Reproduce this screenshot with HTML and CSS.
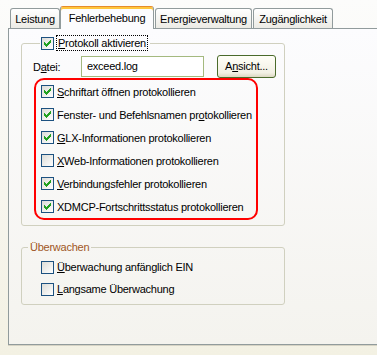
FILE: index.html
```html
<!DOCTYPE html>
<html lang="de">
<head>
    <meta charset="UTF-8">
    <title>Fehlerbehebung</title>
    <link rel="stylesheet" href="styles.css">
</head>
<body>

    <div class="dialog">
        <!-- Tabs -->
        <div class="tabs">
            <div class="tab tab-leistung">Leistung</div>
            <div class="tab tab-active">Fehlerbehebung</div>
            <div class="tab tab-energie">Energieverwaltung</div>
            <div class="tab tab-zugang">Zugänglichkeit</div>
        </div>

        <!-- Tab page -->
        <div class="pane">
            <fieldset class="group group-log">
                <legend class="log-title">
                    <span class="check checked"><svg viewBox="0 0 11 11" width="11" height="11"><path d="M2 4h1v1h1v1h1v-1h1v-1h1v-1h1v-1h1v3h-1v1h-1v1h-1v1h-1v1h-1v-1h-1v-1h-1z"/></svg></span>
                    <span class="focus-label"><u>P</u>rotokoll aktivieren</span>
                </legend>
                <div class="group-body">
                    <div class="file-row">
                        <span class="file-label">D<u>a</u>tei:</span>
                        <span class="text-input">exceed.log</span>
                        <span class="button">A<u>n</u>sicht...</span>
                    </div>
                    <div class="options">
                        <div class="option"><span class="check checked"><svg viewBox="0 0 11 11" width="11" height="11"><path d="M2 4h1v1h1v1h1v-1h1v-1h1v-1h1v-1h1v3h-1v1h-1v1h-1v1h-1v1h-1v-1h-1v-1h-1z"/></svg></span><span><u>S</u>chriftart öffnen protokollieren</span></div>
                        <div class="option"><span class="check checked"><svg viewBox="0 0 11 11" width="11" height="11"><path d="M2 4h1v1h1v1h1v-1h1v-1h1v-1h1v-1h1v3h-1v1h-1v1h-1v1h-1v1h-1v-1h-1v-1h-1z"/></svg></span><span>Fenster- und Befehlsnamen pr<u>o</u>tokollieren</span></div>
                        <div class="option"><span class="check checked"><svg viewBox="0 0 11 11" width="11" height="11"><path d="M2 4h1v1h1v1h1v-1h1v-1h1v-1h1v-1h1v3h-1v1h-1v1h-1v1h-1v1h-1v-1h-1v-1h-1z"/></svg></span><span><u>G</u>LX-Informationen protokollieren</span></div>
                        <div class="option"><span class="check"></span><span><u>X</u>Web-Informationen protokollieren</span></div>
                        <div class="option"><span class="check checked"><svg viewBox="0 0 11 11" width="11" height="11"><path d="M2 4h1v1h1v1h1v-1h1v-1h1v-1h1v-1h1v3h-1v1h-1v1h-1v1h-1v1h-1v-1h-1v-1h-1z"/></svg></span><span><u>V</u>erbindungsfehler protokollieren</span></div>
                        <div class="option"><span class="check checked"><svg viewBox="0 0 11 11" width="11" height="11"><path d="M2 4h1v1h1v1h1v-1h1v-1h1v-1h1v-1h1v3h-1v1h-1v1h-1v1h-1v1h-1v-1h-1v-1h-1z"/></svg></span><span>XDMCP-Fortschrittsstatus protokollieren</span></div>
                    </div>
                </div>
            </fieldset>

            <fieldset class="group group-watch">
                <legend class="watch-title">Überwachen</legend>
                <div class="watch-body">
                    <div class="option"><span class="check"></span><span><u>Ü</u>berwachung anfänglich EIN</span></div>
                    <div class="option"><span class="check"></span><span><u>L</u>angsame Überwachung</span></div>
                </div>
            </fieldset>
        </div>
    </div>

</body>
</html>
```

FILE: styles.css
```css
/* Reset */
* {
    margin: 0;
    padding: 0;
    box-sizing: border-box;
}

body {
    width: 377px;
    height: 355px;
    overflow: hidden;
    font-family: "Liberation Sans", Arial, sans-serif;
    font-size: 11px;
    letter-spacing: -0.25px;
    color: #000;
    background: linear-gradient(#fcfcfb, #f3f1e3);
}

u {
    text-decoration: underline;
    text-underline-offset: 1px;
}

/* Dialog */
.dialog {
    padding: 6px 0 0 8px;
}

/* Tabs */
.tabs {
    display: flex;
    align-items: flex-end;
    height: 22px;
    padding-left: 2px;
}

.tab {
    height: 20px;
    padding-top: 4px;
    text-align: center;
    line-height: 13px;
    border: 1px solid #919b9c;
    border-bottom: none;
    border-radius: 3px 3px 0 0;
    background: linear-gradient(#ffffff, #ecebe5);
}

.tab-leistung { width: 50px; }
.tab-energie { width: 97px; margin-left: 1px; }
.tab-zugang { width: 80px; margin-left: 1px; }

.tab-active {
    position: relative;
    z-index: 1;
    width: 94px;
    height: 23px;
    margin-bottom: -1px;
    padding-top: 5px;
    border-top: 1px solid #e68b2c;
    box-shadow: inset 0 2px 0 #ffc73c;
    background: #fcfcfe;
}

/* Tab page */
.pane {
    width: 380px;
    height: 317px;
    padding: 6px 0 0 12px;
    border: 1px solid #919b9c;
    background: linear-gradient(#fcfcfe, #f4f3ee);
    box-shadow: 0 1px 0 #d6d3c4;
}

/* Group boxes */
.group {
    width: 264px;
    border: 1px solid #d0d0bf;
    border-radius: 3px;
}

.log-title {
    display: flex;
    align-items: center;
    margin-left: 18px;
    padding: 0 2px 0 1px;
}

.focus-label {
    height: 16px;
    margin-left: 2px;
    padding: 0 1px;
    line-height: 14px;
    border: 1px dotted #000;
}

.group-body {
    padding: 4px 0 5px 11px;
}

/* File row */
.file-row {
    display: flex;
    align-items: center;
    height: 23px;
}

.file-label {
    width: 48px;
}

.text-input {
    width: 123px;
    height: 21px;
    padding-left: 5px;
    line-height: 19px;
    border: 1px solid #a4b97f;
    background: #fff;
}

.button {
    width: 59px;
    height: 23px;
    margin-left: 13px;
    text-align: center;
    line-height: 21px;
    border: 1px solid #4b6b2b;
    border-radius: 3px;
    background: linear-gradient(#fffff8, #f2f0e4 80%, #dcd8c2);
}

/* Red frame with log options */
.options {
    width: 224px;
    margin-left: 1px;
    border: 2px solid #ff0000;
    border-radius: 10px;
}

.option {
    display: flex;
    align-items: center;
    height: 23px;
    padding-left: 5px;
}

.option .check {
    margin-right: 3px;
}

/* Checkbox */
.check {
    display: flex;
    width: 13px;
    height: 13px;
    border: 1px solid #1c5180;
    background: linear-gradient(135deg, #dcdcd7, #ffffff);
}

.check svg {
    fill: #21a121;
    shape-rendering: crispEdges;
}

/* Second group */
.group-watch {
    margin-top: 14px;
}

.watch-title {
    margin-left: 6px;
    padding: 0 2px;
    line-height: 14px;
    color: #a0561e;
}

.watch-body {
    padding: 2px 0 4px 19px;
}

.watch-body .option {
    height: 22px;
    padding-left: 0;
}
```
